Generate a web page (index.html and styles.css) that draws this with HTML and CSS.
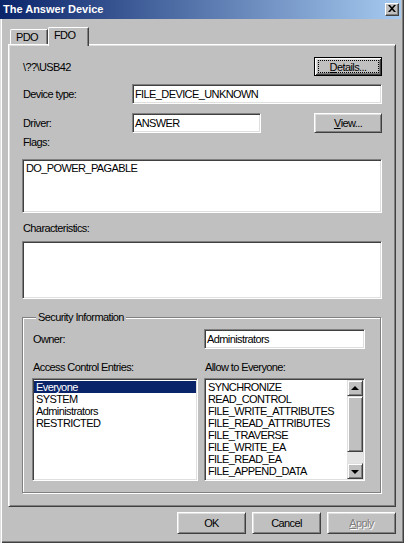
FILE: index.html
```html
<!DOCTYPE html>
<html>
<head>
<meta charset="utf-8">
<link rel="stylesheet" href="styles.css">
</head>
<body>
<div class="window">
  <div class="titlebar">
    <span class="title">The Answer Device</span>
    <span class="close"><svg width="8" height="7" viewBox="0 0 8 7"><path d="M0 0h2l2 2.2L6 0h2L5 3.5 8 7H6L4 4.8 2 7H0l3-3.5z" fill="#000"/></svg></span>
  </div>
  <div class="body">
    <div class="tabs">
      <div class="tab">PDO</div>
      <div class="tab active">FDO</div>
    </div>
    <div class="panel">
      <div class="row r1">
        <span class="lbl">\??\USB42</span>
        <button class="btn default"><span><u>D</u>etails...</span></button>
      </div>
      <div class="row r2">
        <span class="lbl wide">Device type:</span>
        <div class="field grow">FILE_DEVICE_UNKNOWN</div>
      </div>
      <div class="row r3">
        <span class="lbl wide">Driver:</span>
        <div class="field driver">ANSWER</div>
        <button class="btn view"><u>V</u>iew...</button>
      </div>
      <div class="caption flags-cap">Flags:</div>
      <div class="box flags">DO_POWER_PAGABLE</div>
      <div class="caption char-cap">Characteristics:</div>
      <div class="box chars"></div>
      <div class="group">
        <span class="legend">Security Information</span>
        <div class="grid owner-row">
          <span class="lbl">Owner:</span>
          <div class="field">Administrators</div>
        </div>
        <div class="grid heads">
          <span class="lbl">Access Control Entries:</span>
          <span class="lbl">Allow to Everyone:</span>
        </div>
        <div class="grid lists">
          <div class="list">
            <div class="items">
              <div class="item sel">Everyone</div>
              <div class="item">SYSTEM</div>
              <div class="item">Administrators</div>
              <div class="item">RESTRICTED</div>
            </div>
          </div>
          <div class="list">
            <div class="items">
              <div class="item">SYNCHRONIZE</div>
              <div class="item">READ_CONTROL</div>
              <div class="item">FILE_WRITE_ATTRIBUTES</div>
              <div class="item">FILE_READ_ATTRIBUTES</div>
              <div class="item">FILE_TRAVERSE</div>
              <div class="item">FILE_WRITE_EA</div>
              <div class="item">FILE_READ_EA</div>
              <div class="item">FILE_APPEND_DATA</div>
              <div class="item">FILE_WRITE_DATA</div>
            </div>
            <div class="scrollbar">
              <div class="sbtn"><span class="arrow up"></span></div>
              <div class="thumb"></div>
              <div class="track"></div>
              <div class="sbtn"><span class="arrow down"></span></div>
            </div>
          </div>
        </div>
      </div>
    </div>
    <div class="footer">
      <button class="btn foot">OK</button>
      <button class="btn foot">Cancel</button>
      <button class="btn foot disabled"><u>A</u>pply</button>
    </div>
  </div>
</div>
</body>
</html>
```

FILE: styles.css
```css
* { box-sizing: border-box; }
html, body { margin: 0; padding: 0; }
body {
  width: 404px;
  height: 543px;
  overflow: hidden;
  background: #c0c0c0;
  font-family: "Liberation Sans", Arial, sans-serif;
  font-size: 11px;
  letter-spacing: -0.6px;
  color: #000;
}
.window {
  width: 404px;
  height: 543px;
  background: #c0c0c0;
  display: flex;
  flex-direction: column;
  box-shadow: inset 1px 0 #dfdfdf, inset 2px 0 #fff, inset -1px -1px #404040, inset -2px -2px #808080;
}
.titlebar {
  height: 19px;
  margin-right: 3px;
  display: flex;
  align-items: center;
  justify-content: space-between;
  background: linear-gradient(to right, #0a246a, #a6caf0);
  padding: 0 2px 1px 3px;
}
.title {
  color: #fff;
  font-weight: bold;
  letter-spacing: 0;
  font-size: 11px;
}
.close {
  width: 14px;
  height: 13px;
  background: #c0c0c0;
  border: 1px solid;
  border-color: #fff #404040 #404040 #fff;
  box-shadow: inset -1px -1px #808080;
  display: flex;
  align-items: center;
  justify-content: center;
  padding-bottom: 1px;
}
.close svg { display: block; }
.body {
  padding: 8px 8px 0 8px;
  display: flex;
  flex-direction: column;
}
.tabs {
  display: flex;
  height: 17px;
  padding-left: 2px;
  position: relative;
  z-index: 1;
}
.tab {
  height: 15px;
  margin-top: 2px;
  width: 38px;
  padding-left: 5px;
  line-height: 14px;
  border-top: 1px solid #fff;
  border-left: 1px solid #fff;
  border-right: 1px solid #404040;
  border-top-left-radius: 2px;
  box-shadow: inset -1px 0 #808080;
  background: #c0c0c0;
}
.tab.active {
  margin-top: 0;
  height: 19px;
  width: 41px;
  line-height: 13px;
  padding-left: 5px;
  padding-top: 1px;
}
.panel {
  height: 463px;
  border: 1px solid;
  border-color: #fff #404040 #404040 #fff;
  box-shadow: inset 1px 1px #dfdfdf, inset -1px -1px #808080;
  padding: 12px 13px 0 13px;
  display: flex;
  flex-direction: column;
}
.row { display: flex; align-items: center; }
.r1 { height: 19px; justify-content: space-between; }
.r2 { height: 20px; margin-top: 8px; }
.r3 { height: 20px; margin-top: 9px; }
.lbl { padding-left: 1px; white-space: nowrap; }
.lbl.wide { width: 110px; flex: none; }
.field {
  height: 20px;
  background: #fff;
  border: 1px solid;
  border-color: #808080 #fff #fff #808080;
  box-shadow: inset 1px 1px #404040, inset -1px -1px #dfdfdf;
  padding: 0 2px;
  display: flex;
  align-items: center;
  white-space: nowrap;
}
.grow { flex: 1; }
.driver { width: 129px; flex: none; }
.btn {
  font: inherit;
  letter-spacing: inherit;
  color: #000;
  background: #c0c0c0;
  border: 1px solid;
  border-color: #fff #404040 #404040 #fff;
  box-shadow: inset 1px 1px #dfdfdf, inset -1px -1px #808080;
  padding: 0;
  margin: 0;
  display: flex;
  align-items: center;
  justify-content: center;
}
.btn.default {
  width: 68px;
  height: 19px;
  position: relative;
  border: 1px solid #000;
  box-shadow: inset 1px 1px #fff, inset -1px -1px #404040, inset 2px 2px #dfdfdf, inset -2px -2px #808080;
}
.btn.default::after {
  content: "";
  position: absolute;
  left: 3px; right: 2px; top: 2px; bottom: 2px;
  border: 1px dotted #000;
}
.btn.view {
  width: 68px;
  height: 20px;
  margin-left: auto;
}
.caption { height: 13px; line-height: 13px; padding-left: 1px; }
.flags-cap { margin-top: 3px; }
.char-cap { margin-top: 9px; }
.box {
  background: #fff;
  border: 1px solid;
  border-color: #808080 #fff #fff #808080;
  box-shadow: inset 1px 1px #404040, inset -1px -1px #dfdfdf;
  padding: 2px 3px;
  line-height: 13px;
}
.flags { margin-top: 10px; height: 54px; }
.chars { margin-top: 6px; height: 58px; }
.group {
  margin-top: 18px;
  width: 359px;
  border: 1px solid #808080;
  box-shadow: inset 1px 1px #fff, 1px 1px 0 #fff;
  padding: 0 15px 11px 9px;
  display: flex;
  flex-direction: column;
}
.legend {
  align-self: flex-start;
  margin: -7px 0 0 4px;
  padding: 0 2px;
  line-height: 13px;
  height: 13px;
  background: #c0c0c0;
}
.grid {
  display: grid;
  grid-template-columns: 166px 161px;
  column-gap: 6px;
  align-items: center;
}
.owner-row { margin-top: 5px; height: 20px; }
.heads { margin-top: 12px; height: 13px; line-height: 13px; }
.lists { margin-top: 4px; height: 103px; align-items: stretch; }
.list {
  background: #fff;
  border: 1px solid;
  border-color: #808080 #fff #fff #808080;
  box-shadow: inset 1px 1px #404040, inset -1px -1px #dfdfdf;
  padding: 1px 1px 1px 1px;
  display: flex;
  overflow: hidden;
}
.items {
  flex: 1;
  padding-top: 1px;
  overflow: hidden;
}
.item {
  height: 12px;
  line-height: 12px;
  padding-left: 2px;
  white-space: nowrap;
}
.item.sel { background: #0a246a; color: #fff; }
.scrollbar {
  width: 16px;
  flex: none;
  display: flex;
  flex-direction: column;
}
.sbtn, .thumb {
  background: #c0c0c0;
  border: 1px solid;
  border-color: #dfdfdf #404040 #404040 #dfdfdf;
  box-shadow: inset 1px 1px #fff, inset -1px -1px #808080;
}
.sbtn {
  height: 16px;
  display: flex;
  align-items: center;
  justify-content: center;
}
.thumb { height: 56px; }
.track {
  flex: 1;
  background: #e4e4e4;
}
.arrow {
  width: 0;
  height: 0;
  border-left: 4px solid transparent;
  border-right: 4px solid transparent;
}
.arrow.up { border-bottom: 4px solid #000; margin-top: -1px; }
.arrow.down { border-top: 4px solid #000; margin-top: 1px; }
.footer {
  margin-top: 5px;
  display: flex;
  justify-content: flex-end;
  gap: 6px;
}
.btn.foot {
  width: 69px;
  height: 22px;
}
.btn.disabled {
  color: #808080;
  text-shadow: 1px 1px 0 #fff;
}
```
